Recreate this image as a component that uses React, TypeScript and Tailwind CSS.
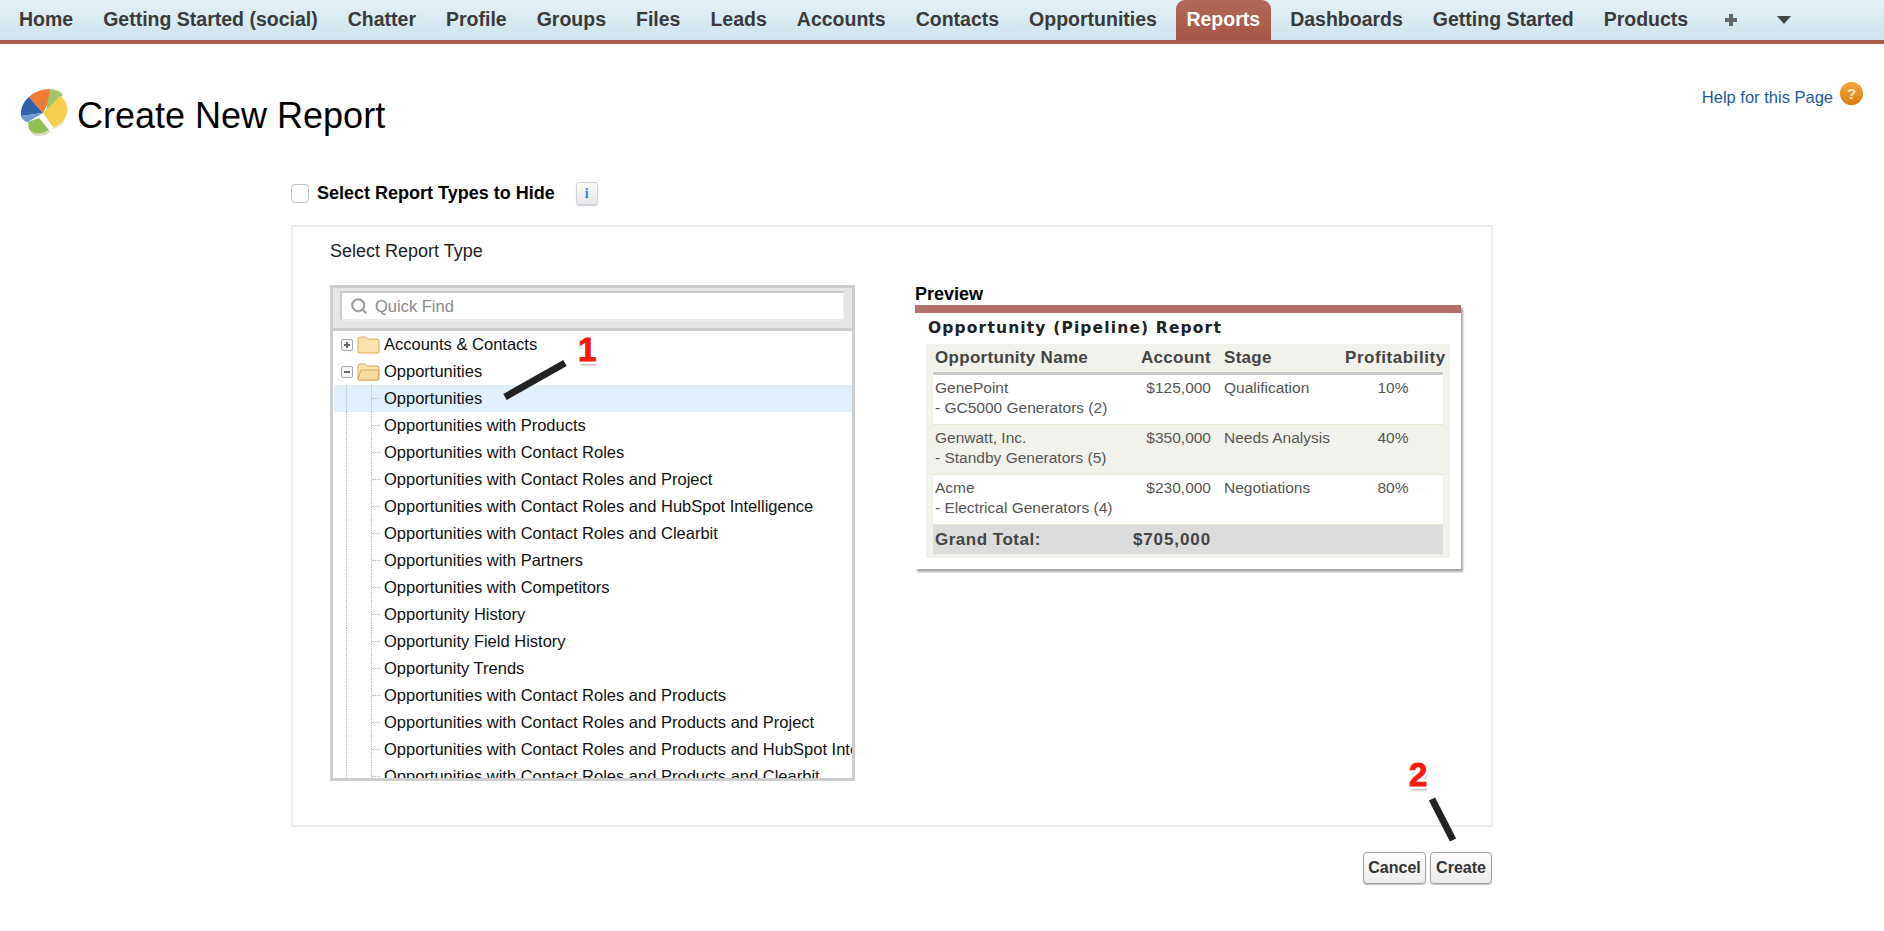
import { Search } from "lucide-react";

const tabs = [
  "Home",
  "Getting Started (social)",
  "Chatter",
  "Profile",
  "Groups",
  "Files",
  "Leads",
  "Accounts",
  "Contacts",
  "Opportunities",
  "Reports",
  "Dashboards",
  "Getting Started",
  "Products",
];

const reportTypes = [
  "Opportunities",
  "Opportunities with Products",
  "Opportunities with Contact Roles",
  "Opportunities with Contact Roles and Project",
  "Opportunities with Contact Roles and HubSpot Intelligence",
  "Opportunities with Contact Roles and Clearbit",
  "Opportunities with Partners",
  "Opportunities with Competitors",
  "Opportunity History",
  "Opportunity Field History",
  "Opportunity Trends",
  "Opportunities with Contact Roles and Products",
  "Opportunities with Contact Roles and Products and Project",
  "Opportunities with Contact Roles and Products and HubSpot Intelligence",
  "Opportunities with Contact Roles and Products and Clearbit",
];

const previewRows = [
  { name: "GenePoint", sub: "- GC5000 Generators (2)", amount: "$125,000", stage: "Qualification", pct: "10%", bg: "bg-white" },
  { name: "Genwatt, Inc.", sub: "- Standby Generators (5)", amount: "$350,000", stage: "Needs Analysis", pct: "40%", bg: "bg-[#f2f2ec]" },
  { name: "Acme", sub: "- Electrical Generators (4)", amount: "$230,000", stage: "Negotiations", pct: "80%", bg: "bg-white" },
];

function PieIcon() {
  return (
    <svg width="48" height="48" viewBox="0 0 48 48" className="shrink-0">
      <path d="M1 27 C0 19 4 12 9 8 L23 24 Z" fill="#2f62a8" />
      <path d="M1 27 C3 32 6 33 8 33 L23 24 Z" fill="#6d9bd0" />
      <path d="M9 8 C16 1 27 -1 35 1 L23 24 Z" fill="#ee7b35" />
      <path d="M30 1 C36 0 41 3 43 6 L26 22 Z" fill="#a5c46a" />
      <path d="M40 7 C50 13 49 27 42 33 C39 36 36 38 33 38 L23 24 Z" fill="#f6cf4f" />
      <path d="M42 33 C39 36 36 38 33 38 L32 40 C38 40 44 36 46 28 Z" fill="#ece8d8" />
      <path d="M8 33 L19 29 L29 41 C23 46 12 46 9 40 Z" fill="#93c053" />
      <path d="M9 40 C12 46 23 46 29 41 L30 43 C23 49 11 48 9 40 Z" fill="#d8d8c8" />
    </svg>
  );
}

function FolderIcon({ open }: { open?: boolean }) {
  return (
    <svg width="23" height="18" viewBox="0 0 23 18" className="shrink-0">
      <path d="M1 3 Q1 1 3 1 H8 L10 3 H20 Q22 3 22 5 V16 Q22 17 21 17 H2 Q1 17 1 16 Z" fill="#fbe3ae" stroke="#d5ab62" />
      {open && <path d="M1 16 L4 7 H22 L21 17 H2 Z" fill="#f7dca0" stroke="#d5ab62" />}
    </svg>
  );
}

function ExpandBox({ open }: { open?: boolean }) {
  return (
    <span className="relative z-10 flex h-[12px] w-[12px] shrink-0 items-center justify-center rounded-[2px] border border-[#a8a8a8] bg-[#f4f4f4]">
      <span className="absolute h-[2px] w-[6px] bg-[#666]" />
      {!open && <span className="absolute h-[6px] w-[2px] bg-[#666]" />}
    </span>
  );
}

function Arrow({ d }: { d: string }) {
  return <path d={d} stroke="#222" strokeWidth="7" fill="none" />;
}

export default function App() {
  return (
    <div className="relative min-h-screen overflow-hidden bg-white font-['Liberation_Sans',Arial,sans-serif] text-black">
      <nav className="flex h-[44px] items-stretch border-b-[4px] border-[#a9594b] bg-gradient-to-b from-[#e4f1f7] to-[#cde4ee] pl-[4px] text-[19.5px] font-bold text-[#3a3a3a]">
        {tabs.map((tab) =>
          tab === "Reports" ? (
            <a key={tab} className="ml-[4px] mr-[4.5px] flex items-center rounded-t-[9px] bg-gradient-to-b from-[#b2685a] to-[#a65646] px-[10.5px] text-white">
              {tab}
            </a>
          ) : (
            <a key={tab} className="flex items-center px-[15px]">
              {tab}
            </a>
          )
        )}
        <a className="flex items-center pl-[22px]">
          <svg width="12" height="12" viewBox="0 0 12 12">
            <path d="M4 0 H8 V4 H12 V8 H8 V12 H4 V8 H0 V4 H4 Z" fill="#666" />
          </svg>
        </a>
        <a className="flex items-center pl-[40px]">
          <svg width="14" height="8" viewBox="0 0 14 8">
            <path d="M0 0 H14 L7 8 Z" fill="#444" />
          </svg>
        </a>
      </nav>

      <header className="flex items-start justify-between pl-[20px] pr-[21px] pt-[45px]">
        <div className="flex items-start gap-[9px]">
          <PieIcon />
          <h1 className="mt-[3px] text-[36px] leading-[48px] font-normal">Create New Report</h1>
        </div>
        <a className="-mt-[7px] flex items-start gap-[7px] text-[16.5px] leading-[19px] text-[#1a5c9e]">
          <span className="mt-[6px]">Help for this Page</span>
          <span className="flex h-[23px] w-[23px] items-center justify-center rounded-full bg-gradient-to-b from-[#f5a93b] to-[#d97a10] text-[15px] font-bold text-[#fde9c4]">?</span>
        </a>
      </header>

      <main className="ml-[291px] mt-[41px] w-[1202px]">
        <div className="flex h-[24px] items-center">
          <span className="h-[19px] w-[18px] rounded-[4px] border border-[#c4c4c4] bg-white" />
          <span className="ml-[8px] text-[18px] font-bold">Select Report Types to Hide</span>
          <span className="ml-[21px] flex h-[23px] w-[22px] items-center justify-center rounded-[3px] border border-[#d2d2d2] bg-gradient-to-b from-[#fafafa] to-[#e4e8ec] font-['Liberation_Serif',serif] text-[14px] font-bold text-[#2f7fc8] shadow-[0_1px_1px_rgba(0,0,0,0.2)]">i</span>
        </div>

        <section className="mt-[20px] flex h-[602px] border-2 border-[#ebebeb] pl-[37px]">
          <div className="w-[525px]">
            <h2 className="mt-[14px] h-[20px] text-[18px] leading-[20px] font-normal text-[#222]">Select Report Type</h2>
            <div className="mt-[24px] h-[496px] overflow-hidden border-[3px] border-[#cecece]">
              <div className="h-[40px] bg-[#e6e6e6] pl-[7px] pr-[7px] pt-[3px]">
                <div className="flex h-[30px] items-center gap-[7px] border-2 border-[#c9c9c9] border-r-[#ececec] border-b-[#ececec] bg-white pl-[8px] text-[16.5px] text-[#8a8a8a]">
                  <Search size={18} strokeWidth={3} className="text-[#a0a0a0]" />
                  Quick Find
                </div>
              </div>
              <div className="border-t-[3px] border-[#cecece] pl-[1px] text-[16.5px] whitespace-nowrap text-[#111]">
                <div className="flex h-[27px] items-center gap-[4px] pl-[7px]">
                  <ExpandBox />
                  <FolderIcon />
                  <span>Accounts &amp; Contacts</span>
                </div>
                <div className="flex h-[27px] items-center gap-[4px] pl-[7px]">
                  <ExpandBox open />
                  <FolderIcon open />
                  <span>Opportunities</span>
                </div>
                {reportTypes.map((name, i) => (
                  <div key={name} className={"flex h-[27px] items-stretch overflow-hidden " + (i === 0 ? "bg-[#dff0fb]" : "")}>
                    <span className="ml-[12px] w-[25px] shrink-0 border-l border-dotted border-[#bbb]" />
                    <span className="w-[13px] shrink-0 self-stretch border-l border-dotted border-[#bbb]">
                      <span className="mt-[13px] block w-[8px] border-t border-dotted border-[#bbb]" />
                    </span>
                    <span className="flex items-center">{name}</span>
                  </div>
                ))}
              </div>
            </div>
          </div>

          <div className="ml-[60px] mt-[58px] w-[546px]">
            <h3 className="mb-[2px] h-[18px] text-[18px] leading-[18px] font-bold">Preview</h3>
            <div className="h-[264px] border-t-[8px] border-[#b1706a] bg-white px-[11px] pb-[12px] shadow-[2px_3px_2px_rgba(0,0,0,0.35)]">
              <div className="h-[31px] pl-[2px] pt-[4px] font-['DejaVu_Sans',sans-serif] text-[15.5px] leading-[22px] font-bold tracking-[1.15px] text-[#222]">Opportunity (Pipeline) Report</div>
              <div className="bg-[#f2f2ec] px-[7px] pb-[4px] text-[15.5px] text-[#555]">
                <div className="grid h-[31px] grid-cols-[190px_86px_134px_100px] items-center border-b-[3px] border-[#c9c9c9] pl-[2px] text-[17px] font-bold tracking-[0.3px] text-[#444]">
                  <span>Opportunity Name</span>
                  <span className="text-right">Account</span>
                  <span className="pl-[13px]">Stage</span>
                  <span className="pr-[10px] text-center tracking-[0.55px] whitespace-nowrap">Profitability</span>
                </div>
                {previewRows.map((row) => (
                  <div key={row.name} className={"grid h-[50px] grid-cols-[190px_86px_134px_100px] border-b border-[#ebe6d2] pl-[2px] pt-[3px] leading-[20px] " + row.bg}>
                    <span className="whitespace-nowrap">
                      {row.name}
                      <br />
                      {row.sub}
                    </span>
                    <span className="text-right">{row.amount}</span>
                    <span className="pl-[13px] whitespace-nowrap">{row.stage}</span>
                    <span className="pr-[4px] text-center">{row.pct}</span>
                  </div>
                ))}
                <div className="grid h-[29px] grid-cols-[190px_86px_134px_100px] items-center bg-[#dcdcdc] pl-[2px] text-[17px] font-bold tracking-[0.5px] whitespace-nowrap text-[#444]">
                  <span>Grand Total:</span>
                  <span className="text-right tracking-[0.9px]">$705,000</span>
                </div>
              </div>
            </div>
          </div>
        </section>

        <div className="mt-[25px] flex justify-end gap-[4px] pr-[1px] text-[16px] font-bold text-[#333]">
          <button className="h-[32px] w-[63px] rounded-[4px] border border-[#a0a0a0] bg-gradient-to-b from-white to-[#ececec] shadow-[0_1px_1px_rgba(0,0,0,0.25)]">Cancel</button>
          <button className="h-[32px] w-[62px] rounded-[4px] border border-[#a0a0a0] bg-gradient-to-b from-white to-[#ececec] shadow-[0_1px_1px_rgba(0,0,0,0.25)]">Create</button>
        </div>
      </main>

      {/* step callouts drawn over the page */}
      <svg className="pointer-events-none absolute left-0 top-0" width="1884" height="931">
        <Arrow d="M505 397 L565 363" />
        <Arrow d="M1432 799 L1453 840" />
      </svg>
      <span className="absolute left-[578px] top-[331px] text-[33px] leading-[38px] font-bold text-[#f41c0c] [-webkit-text-stroke:1px_#f41c0c] [text-shadow:-3px_0_0_#fff,3px_0_0_#fff,0_-3px_0_#fff,0_3px_0_#fff,2px_2px_0_#fff,-2px_-2px_0_#fff,2px_-2px_0_#fff,-2px_2px_0_#fff,1px_4px_3px_rgba(0,0,0,0.35)]">1</span>
      <span className="absolute left-[1409px] top-[756px] text-[33px] leading-[38px] font-bold text-[#f41c0c] [-webkit-text-stroke:1px_#f41c0c] [text-shadow:-3px_0_0_#fff,3px_0_0_#fff,0_-3px_0_#fff,0_3px_0_#fff,2px_2px_0_#fff,-2px_-2px_0_#fff,2px_-2px_0_#fff,-2px_2px_0_#fff,1px_4px_3px_rgba(0,0,0,0.35)]">2</span>
    </div>
  );
}
